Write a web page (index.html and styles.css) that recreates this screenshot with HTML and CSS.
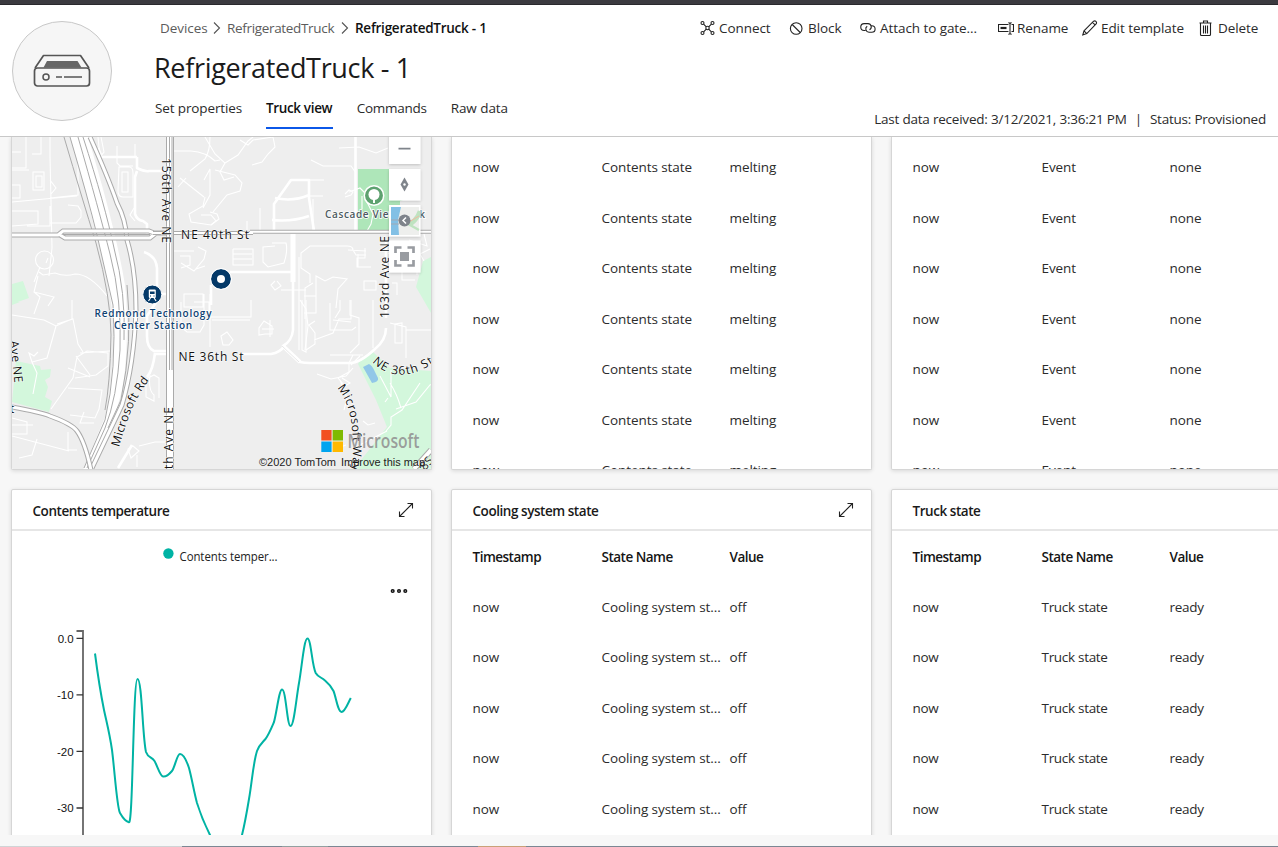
FILE: index.html
```html
<!DOCTYPE html>
<html lang="en">
<head>
<meta charset="utf-8">
<title>RefrigeratedTruck - 1</title>
<link rel="stylesheet" href="styles.css">
</head>
<body>
<div class="topbar"></div>
<header class="header">
  <div class="avatar">
    <svg width="58" height="36" viewBox="0 0 58 36" fill="none" stroke="#555" stroke-width="1.700" stroke-linejoin="round">
      <path d="M2 15 10.500 2.500h37l8.500 12.500"/><path d="M10.500 14.500l3.500-6.500h30.500l4 6.500z" fill="#666" stroke="none"/>
      <rect x="1.500" y="15" width="55" height="18" rx="3"/><circle cx="13" cy="24" r="3" stroke-width="1.500"/><path d="M23 24h6M31 24h18"/>
    </svg>
  </div>
  <div class="heading">
    <nav class="crumbs">
      <span class="c1">Devices</span><svg width="8" height="14" viewBox="0 0 8 14"><path d="m1 1.500 5.500 5.500L1 12.500"/></svg><span class="c2">RefrigeratedTruck</span><svg width="8" height="14" viewBox="0 0 8 14"><path d="m1 1.500 5.500 5.500L1 12.500"/></svg><span class="c3">RefrigeratedTruck - 1</span>
    </nav>
    <h1 class="title">RefrigeratedTruck - 1</h1>
    <nav class="tabs"><a class="t1">Set properties</a><a class="t2 active">Truck view</a><a class="t3">Commands</a><a class="t4">Raw data</a></nav>
  </div>
  <div class="side">
    <div class="toolbar">
      <span class="tool"><svg class="icon" viewBox="0 0 16 16"><circle cx="2.500" cy="3" r="1.500"/><circle cx="12.500" cy="3" r="1.500"/><circle cx="2.500" cy="13" r="1.500"/><circle cx="12.500" cy="13" r="1.500"/><circle cx="7.500" cy="8" r="1.700"/><path d="m3.600 4.100 2.700 2.700m2.400 0 2.700-2.700m-7.800 7.800 2.700-2.700m2.400 0 2.700 2.700"/></svg>Connect</span>
      <span class="tool"><svg class="icon" viewBox="0 0 16 16"><circle cx="7.200" cy="8.500" r="5.800"/><path d="m3.200 4.500 8 8"/></svg>Block</span>
      <span class="tool"><svg class="icon wide" viewBox="0 0 17 16"><path d="M5.500 10.500H4.200a3.400 3.400 0 0 1 0-6.900H8a3.300 3.300 0 0 1 1.500 6.200M10.500 5.700h1.300a3.300 3.300 0 0 1 0 6.600H9a3.300 3.300 0 0 1-1.800-6"/></svg>Attach to gate...</span>
      <span class="tool"><svg class="icon" viewBox="0 0 16 16"><path d="M10.500 4.500H.500v7h10M13.500 4.500h2v7h-2M10.500 2.500l1.500 1 1.500-1m-1.500 1v10m-1.500 1 1.500-1 1.500 1"/><path d="M2.500 8h6" stroke-width="2.200"/></svg>Rename</span>
      <span class="tool"><svg class="icon" viewBox="0 0 16 16"><path d="M.800 15 2 10.800 11.600 1.200q1.300-.7 2.300.2 1.200 1.300.2 2.600L4.800 13.600zM10.500 2.300l2.800 2.800M2 10.800l2.800 2.800"/></svg>Edit template</span>
      <span class="tool"><svg class="icon" viewBox="0 0 16 16"><path d="M1.500 3.500v11a1 1 0 0 0 1 1h8a1 1 0 0 0 1-1v-11M.500 3h12M4.500 3V1h4v2M4.500 5.500v8m2-8v8m2-8v8"/></svg>Delete</span>
    </div>
    <p class="status"><span>Last data received: 3/12/2021, 3:36:21 PM</span><span class="bar">|</span><span>Status: Provisioned</span></p>
  </div>
</header>

<main class="board">
  <section class="card map">
    <svg width="419" height="332" viewBox="12 137 419 332">
      <defs>
        <path id="rd" d="M119 447C125 428 131 403 150 379"/>
        <path id="way" d="M337 388C350 403 355 425 352 474"/>
        <path id="st36" d="M372 362Q398 388 437 361"/>
        <filter id="sh" x="-20%" y="-20%" width="140%" height="140%"><feDropShadow dx="0" dy="1" stdDeviation="1.500" flood-opacity=".2"/></filter>
      </defs>
      <rect x="12" y="137" width="419" height="332" fill="#eee"/>
      <g fill="#d3f7dc">
        <path d="M12 284 23 281 29 298 12 304zM12 302h8l-8 3zM16 361 40 366 41 370 51 369 50 377 45 380 48 387 45 397 52 401 49 412 12 402z"/>
        <path d="M359 362 373 352 390 368 431 371V469H354L387 427 376 400 358 364zM423 261 431 257V313L416 287z"/>
      </g>
      <path d="M358 169h42v63h-42z" fill="#aee6b9"/>
      <path d="M389 200h14l-12 4z" fill="#aee6b9"/>
      <path d="M363 367l6-3q3 1 6 8l3 6q1 4-6 5z" fill="#91c7e8"/>

      <g class="thin">
        <path d="M12 152h9m5-15v31h-14M41 137v17h-9M50 137v19l2 92-3 28M29 170h-17m0 15h8v13h-8M50 198 78 195V160M12 202l65-6M33 172h11v18H33zM36 176h6v11h-6zM50 180l6 8-5 6M12 211h26v13l-26 2M50 206v20H27M68 205l10 1 3 5v6l-5 6H50"/>
        <circle cx="44.500" cy="260" r="9"/>
        <path d="m46 263 2-5M40 267 34 282m5-10 4 3 12-2q10 4 20 1 15 0 32 22M38 276 34 292l6 5-6 17M34 292l20 5-6 9"/>
        <path d="M98 137l2 20 4-5-3-15m16 9v17l3 3h13M135 144v12M119 167h10q4 0 4 6v24h-10q-5 0-5-6zM122 172h6v20h-6zM134 208l-4 7 5 6M174 151h17q15 1 24 10l5-1M190 171l15-12q5-8 5-22M180 178l24 19m0-17 6-11v26l-7 13M178 187l8-9M205 197l-2 9-14 8 2 8 20 3 5-4-5-6h-10"/>
        <path d="M205 137l10 17 10 9-5 9 4 8 10-3M225 163l13-8 10-14 5-4M215 170l20 5 7 8-2 8-13 4-14 17M240 140l8 5 5-5 20-3 2 10-7 7-6 8-10 3M311 160l12 6h28l5 7M339 148l20-1 17 6 12-5M345 194l4-4 4 2-2 3-6 2M349 192l11-4 5 5M210 212l7 2 2 5-8 6M247 221v9m13-22v22M310 180h14m-14 16h13m-10 3v32M362 196v13M367 202l6 12-2 10-4 7"/>
        <path d="M198 247l8 4-2 8-10 12-13-8M174 251h20m-14 5h10v9l-9 3M205 266l-9 3M236 249h17v16h-20v-16m0 5h19m-19 5h19M272 243h14q2 8-2 20l-16 4-5-5v-15l12-1M248 249h-15M275 281l-4 4 4 5 6-4-4-5m4 9h25M310 283v-9l-9-6v-15l9-7h37q6 0 6 4l3 5h10M365 248v10h-8v9h14M358 254v13M348 250l18 1M313 283l-8 5v31M304 296h12v17h-12M316 296v-20l9 5 8-4 14 2-9 10-2 19M364 281h12v9h-12zM388 253l10 7 10 5M402 268v12h13M405 263h12v12M392 283h5v12"/>
        <path d="M184 294h19v13h-19zM181 302v25l6 5h13l4-7v-31m6 0v53M194 302h15v10h-15M210 317h41v-17M212 320h38M300 300l6 9 2 17-3 24M330 303v27h22l4-3M315 321l-6 4 6 8v11l-9 6M333 320l18 2m0-22v19h-12l-6 14-19 7"/>
        <path d="M264 321l8 5v8h-7l-6 1v-7zM262 329h12m-4-9v17M221 336l6-4 6 8-4 5h-6zM350 300v15l9 3v26l-9 9M373 300v48M395 324v19h7v-20zM390 323l16 4v31M406 330h25M330 355h33m-10 0-4 8v9l-11 6 7 8 5-3-8-5M351 365l9-9M317 374l14 5 15-3 7-8M340 380l7 18-3 12"/>
        <path d="M12 315l32 5 12 6 16-7V300M56 326l-9 32-15 4 5 11-4 21m24-70 16-5 5 25 5 8M32 362l-3-9 5 3 4-4M80 353l30-2M73 378l4-21 10-6 21 2v13l-12 9-21 3m-7-10 22 9m-14-21 14 19M73 378l-22 31M68 388l34 2-3 19-4 9-25-3M84 412l-4 11h14M12 418l15 4v12H12m0-9h21M12 436l57 15M37 439l-5 16-13 3M68 432v18h9M150 375q-2 15 4 20v6l-8-4v-18l8-4 5 3v20M131 458l8-7-6-5-5 3zM137 455v12M139 446l16-4h18"/>
        <path d="M391 370v27l-11-21m8 22-3 4M420 383l-18 27-11 7v8l-5 6m15-23q-4-14-11-25m6 26 20-7 14-17 11-5M375 423l-7 2-5-4M352 449l35-18M335 449l11-4M424 261l-4-7 10-5M409 240l18 6-3-12M395 246l15-2"/>
        <path d="M299 350v-93M302 300v50l4 2V300M340 300v10l-5 8M405 260q-8-12-15-11"/>
      </g>

      <g class="mid">
        <path d="M101 157h36m-36-2-3-7M137 157v11q8 4 12 3h17M137 171l-2 6v37q2 6 8 7l4 3v10"/>
        <path d="M355.500 137v95M274 233v-29l17-24h18v18l5 33M275 198q18 4 34-3M272 220q20 2 37-4"/>
        <path d="M230 272h64M144 252q12 4 13 16v33l-10 15v20q0 12 7 15h17M155 353q-2 17-8 24M118 468l14-23M293 234v96q-1 11-10 16l17 16q4 1 10 1h40q10 0 25-14 11-9 11-21"/>
        <path d="M243 354h28q9-1 14-9M154 354h16M157 294h10M211 285v20M386 242v76"/>
      </g>
      <path d="M293 234v48" stroke="#fff" stroke-width="5" fill="none"/>
      <path d="M283 346l17 16" stroke="#fff" stroke-width="4"/>
      <path d="M282 346l17 16" stroke="#ddd" stroke-width=".7"/>

      <g fill="none">
        <path d="M70 137Q84 182 93 222Q112 290 114 330Q113 380 105 417L83 470H89Q122 410 125 370Q129 320 125 285Q116 230 88 137Z" fill="#fff"/>
        <g stroke="#aaa" stroke-width="1">
          <path d="M64 137Q82 198 96 243Q111 298 111 335Q110 385 105 410M70 137Q88 198 97 235L113 305Q117 370 105 420L84 468M78 137Q99 210 110 254Q122 300 120 350Q117 398 105 428L87 468M83 137Q105 205 114 248Q126 293 124 340"/>
        </g>
        <path class="case5" d="M90 137Q108 177 117 203 126 220 127 240 136 270 136 310 134 365 122 405L92 468"/>
        <path class="in5" d="M90 137Q108 177 117 203 126 220 127 240 136 270 136 310 134 365 122 405L92 468"/>
        <path d="M127 285q6 55-6 115l-13 28" stroke="#aaa"/>
        <path class="case5" d="M12 407Q40 412 50 416 72 424 77 431 85 442 91 470"/>
        <path class="in5" d="M12 407Q40 412 50 416 72 424 77 431 85 442 91 470"/>
        <path class="case5" d="M12 235h46l5-4h86l5 2h16M60 235l5 3h85l5-4"/>
        <path class="in5" d="M12 235h46l5-4h86l5 2h16M60 235l5 3h85l5-4"/>
        <path d="M63 234.500h87" stroke="#aaa"/>
        <path d="M153 233h100" stroke="#aaa" stroke-width="4"/><path d="M250 231.800h181" stroke="#aaa" stroke-width="4"/><path d="M153 233h100" stroke="#fff" stroke-width="2"/><path d="M250 231.800h181" stroke="#fff" stroke-width="2"/>
        <path d="M170 137V469" stroke="#aaa" stroke-width="8"/><path d="M170 137V469" stroke="#fff" stroke-width="6"/><path d="M169.500 137V370M172 137V370" stroke="#aaa"/>
        <path d="M414 469l17-19" stroke="#aaa" stroke-width="6"/><path d="M414 469l17-19" stroke="#fff" stroke-width="4"/>
      </g>

      <g class="road">
        <text transform="translate(162 158) rotate(90)" textLength="85">156th Ave NE</text>
        <text x="181" y="238.500" textLength="68">NE 40th St</text>
        <text x="178.500" y="361" textLength="65">NE 36th St</text>
        <text transform="translate(389 318) rotate(-90)" textLength="82">163rd Ave NE</text>
        <text transform="translate(172.500 469) rotate(-90)" textLength="62">th Ave NE</text>
        <text transform="translate(10 341) rotate(84)" textLength="42">Ave NE</text>
        <text x="10" y="413">t</text>
        <text><textPath href="#rd" textLength="74">Microsoft Rd</textPath></text>
        <text><textPath href="#way" textLength="86">Microsoft Way</textPath></text>
        <text><textPath href="#st36" textLength="68">NE 36th St</textPath></text>
        <text transform="translate(425 471) rotate(-48)">8S</text>
      </g>
      <g class="poi">
        <text x="94.500" y="317" textLength="117">Redmond Technology</text>
        <text x="114" y="329" textLength="78">Center Station</text>
        <text class="park" x="325" y="218" textLength="100">Cascade View Park</text>
      </g>
      <circle cx="152.300" cy="294.500" r="9.500" fill="#043968" stroke="#fff"/>
      <rect x="148.800" y="289.500" width="7" height="8.500" rx="1" fill="#fff"/><path d="M150 291.500h4.600v2.500h-4.600z" fill="#043968"/><path d="M150.500 298l-2 3m5.600-3 2 3" stroke="#fff" stroke-width="1.200"/><path d="M150 296h1m2.500 0h1" stroke="#043968"/>
      <circle cx="374" cy="195.500" r="9.700" fill="#5da16f" stroke="#fff" stroke-width="1.500"/>
      <circle cx="374" cy="194.500" r="5.500" fill="#fff"/><path d="M374 196v7" stroke="#fff" stroke-width="2"/>
      <circle cx="221" cy="279" r="7" fill="#fff" stroke="#043968" stroke-width="6"/><circle cx="221" cy="279" r="10.500" fill="none" stroke="#fff"/>

      <g fill="#fff" filter="url(#sh)"><rect x="389" y="130" width="31.500" height="34"/><rect x="389" y="169" width="31.500" height="31.500"/><rect x="389" y="205" width="31.500" height="31.500"/><rect x="389" y="240.500" width="31.500" height="32"/></g>
      <path d="M398.500 148.700h12" stroke="#7f848b" stroke-width="1.800"/>
      <path d="M404.500 177.500l4 7-4 7-4-7z" fill="#7f848b"/><circle cx="404.500" cy="184.500" r="1.200" fill="#fff"/>
      <path d="M391 207h28v28h-28z" fill="#eeefed"/><path d="M391 207h10l-3 13 1 15h-8z" fill="#83c0e5"/><path d="M391 220h8m-8 4h8" stroke="#9fa9b5"/><path d="M405 223q10 0 14-12v5q-5 8-9 9l9 5" fill="none" stroke="#bfe3c0" stroke-width="2.500"/><path d="M409 222l10-6" stroke="#f1b9a3"/>
      <circle cx="404.500" cy="220.500" r="6" fill="#7f848b"/><path d="M406 217.500l-3 3 3 3" fill="none" stroke="#fff" stroke-width="1.500"/>
      <path d="M400 252h9v9h-9z" fill="#999ca1"/><path d="M395.500 253v-5.500h6m6 0h6v5.500m0 7v5.500h-6m-6 0h-6v-5.500" fill="none" stroke="#999ca1" stroke-width="2.700"/>

      <path d="M321.300 430h10.300v10.500h-10.300z" fill="#f25022"/><path d="M332.600 430h10.400v10.500h-10.400z" fill="#7fba00"/><path d="M321.300 441.500h10.300V452h-10.300z" fill="#00a4ef"/><path d="M332.600 441.500h10.400V452h-10.400z" fill="#ffb900"/>
      <text class="brand" x="347.500" y="448" textLength="72" lengthAdjust="spacingAndGlyphs">Microsoft</text>
      <text class="credit" x="259" y="465.500" textLength="77" lengthAdjust="spacingAndGlyphs">©2020 TomTom</text>
      <text class="credit" x="341" y="465.500" textLength="84" lengthAdjust="spacingAndGlyphs">Improve this map</text>
    </svg>
  </section>

  <section class="card scrolled">
    <div class="row"><span>now</span><span>Contents state</span><span>melting</span></div>
    <div class="row"><span>now</span><span>Contents state</span><span>melting</span></div>
    <div class="row"><span>now</span><span>Contents state</span><span>melting</span></div>
    <div class="row"><span>now</span><span>Contents state</span><span>melting</span></div>
    <div class="row"><span>now</span><span>Contents state</span><span>melting</span></div>
    <div class="row"><span>now</span><span>Contents state</span><span>melting</span></div>
    <div class="row"><span>now</span><span>Contents state</span><span>melting</span></div>
  </section>

  <section class="card scrolled">
    <div class="row"><span>now</span><span>Event</span><span>none</span></div>
    <div class="row"><span>now</span><span>Event</span><span>none</span></div>
    <div class="row"><span>now</span><span>Event</span><span>none</span></div>
    <div class="row"><span>now</span><span>Event</span><span>none</span></div>
    <div class="row"><span>now</span><span>Event</span><span>none</span></div>
    <div class="row"><span>now</span><span>Event</span><span>none</span></div>
    <div class="row"><span>now</span><span>Event</span><span>none</span></div>
  </section>

  <section class="card">
    <h2 class="card-head"><span>Contents temperature</span><svg width="16" height="16" viewBox="0 0 16 16"><path d="M1.500 14.500l13-13M9.500 1.500h5v5M1.500 9.500v5h5"/></svg></h2>
    <svg class="chart" width="419" height="320" viewBox="12 531 419 320">
      <circle cx="168.400" cy="553.500" r="5.200" fill="#00b3a4"/>
      <text class="legend" x="179.500" y="561" textLength="98" lengthAdjust="spacingAndGlyphs">Contents temper...</text>
      <g fill="#fff" stroke="#111" stroke-width="1.500"><circle cx="392.700" cy="591" r="1.300"/><circle cx="399" cy="591" r="1.300"/><circle cx="405.300" cy="591" r="1.300"/></g>
      <path d="M76.500 631H83V850" fill="none" stroke="#666" stroke-width="1.800"/>
      <path d="M76.500 638.300H83M76.500 694.900H83M76.500 751.400H83M76.500 808H83" stroke="#333" stroke-width="1.300"/>
      <g class="tick"><text x="73.500" y="642.500">0.0</text><text x="73.500" y="699">-10</text><text x="73.500" y="755.500">-20</text><text x="73.500" y="812">-30</text></g>
      <path d="M95 653.500C98 677 101 695 104 710 107 724 109.500 733 112 750 114.500 769 117 808 120 813 124 820 126 821 129 822.300 133 824 133 679 137.500 679 142 679 142.500 738 146 752 148 758 152 757 154.500 761 157.500 766 160 776 163 776.500 166 777 169 774.500 172 771 175 767 177 754 180 754 184 754 187 762 189 768 192 779 194 792 197 803 201 816 205 825 210 835Q224 862 242 835C245 823 247 811 249 799 252 782 253 764 257 751 259 745 262 743 265.500 739 269 734 271 729 274 722 277 711 279 690 282 689.500 286 689 287 726 290.500 726 294 726 296 700 299 683 302 666 304 638.500 307.500 638.500 311 638.500 312 666 315.700 673 318 677 321 677 325 680.500 328 683 331 686 333.500 691 336 697 338 712 341.500 712 345 712 348 703 350.800 698" fill="none" stroke="#00b3a4" stroke-width="2"/>
    </svg>
  </section>

  <section class="card">
    <h2 class="card-head"><span>Cooling system state</span><svg width="16" height="16" viewBox="0 0 16 16"><path d="M1.500 14.500l13-13M9.500 1.500h5v5M1.500 9.500v5h5"/></svg></h2>
    <div class="row th"><span>Timestamp</span><span>State Name</span><span>Value</span></div>
    <div class="row"><span>now</span><span>Cooling system st...</span><span>off</span></div>
    <div class="row"><span>now</span><span>Cooling system st...</span><span>off</span></div>
    <div class="row"><span>now</span><span>Cooling system st...</span><span>off</span></div>
    <div class="row"><span>now</span><span>Cooling system st...</span><span>off</span></div>
    <div class="row"><span>now</span><span>Cooling system st...</span><span>off</span></div>
  </section>

  <section class="card">
    <h2 class="card-head"><span>Truck state</span></h2>
    <div class="row th"><span>Timestamp</span><span>State Name</span><span>Value</span></div>
    <div class="row truck"><span>now</span><span>Truck state</span><span>ready</span></div>
    <div class="row truck"><span>now</span><span>Truck state</span><span>ready</span></div>
    <div class="row truck"><span>now</span><span>Truck state</span><span>ready</span></div>
    <div class="row truck"><span>now</span><span>Truck state</span><span>ready</span></div>
    <div class="row truck"><span>now</span><span>Truck state</span><span>ready</span></div>
  </section>
</main>
<div class="edge"></div>
</body>
</html>
```
FILE: styles.css
```css
* { box-sizing: border-box; }
body {
  margin: 0; height: 847px; overflow: hidden; background: #f7f7f7; color: #2b2b2b;
  font: 13.5px/20px "Open Sans", "Noto Sans", sans-serif; letter-spacing: -.07px;
  display: flex; flex-direction: column;
}
.topbar { height: 5px; background: #3b3a40; border-bottom: 1px solid #29282d; flex: none; }
.header { height: 132px; flex: none; background: #fff; border-bottom: 1px solid #c8c8c8; display: flex; padding-left: 12px; }
.avatar { width: 100px; height: 100px; margin-top: 15.5px; border-radius: 50%; border: 1px solid #c8c8c8; background: #f6f6f6; display: flex; align-items: center; justify-content: center; flex: none; }
.heading { width: 420px; padding: 13px 0 0 42px; flex: none; white-space: nowrap; }
.crumbs { display: flex; align-items: center; height: 20px; padding-left: 6px; color: #5c5c5c; }
.crumbs svg { margin: 0 6px; fill: none; stroke: #555; stroke-width: 1.1; flex: none; }
.c1 { width: 47px; }
.c2 { width: 108px; letter-spacing: -.33px; }
.c3 { font-weight: 600; color: #111; letter-spacing: -.25px; }
.title { margin: 8px 0 0; font-size: 27px; line-height: 44px; font-weight: 400; color: #1b1b1b; letter-spacing: -.32px; }
.tabs { display: flex; height: 37px; margin-top: 2px; padding-left: 1px; }
.tabs a { height: 37px; line-height: 32px; margin-right: 24px; }
.tabs a.active { font-weight: 600; color: #111; border-bottom: 2px solid #0b57e8; letter-spacing: -.35px; }
.t1 { width: 87px; letter-spacing: -.12px; }
.t2 { width: 67px; }
.t3 { width: 70px; letter-spacing: -.25px; }
.side { flex: 1; padding: 13px 12px 0 168px; }
.toolbar { display: grid; grid-template-columns: 89px 71px 138px 84px 117px 60px; height: 20px; white-space: nowrap; }
.tool { display: flex; align-items: center; gap: 3px; }
.icon { width: 16px; height: 16px; flex: none; fill: none; stroke: #222; stroke-width: 1.1; }
.icon.wide { width: 17px; }
.status { display: flex; justify-content: flex-end; margin: 71px 0 0; white-space: nowrap; letter-spacing: -.22px; }
.bar { margin: 0 8px; }

.board { height: 698px; flex: none; overflow: hidden; display: grid; grid-template-columns: repeat(3, 420px); grid-template-rows: 333px 400px; column-gap: 20px; row-gap: 19px; padding-left: 11px; }
.card { width: 421px; background: #fff; border: 1px solid #d6d6d6; border-radius: 2px; box-shadow: 0 1px 4px rgba(0,0,0,.13); overflow: hidden; }
.map, .scrolled { border-top: 0; border-radius: 0 0 2px 2px; }
.map svg { display: block; letter-spacing: 0; }
.scrolled { padding-top: 5px; }
.card-head { display: flex; justify-content: space-between; align-items: center; height: 41px; margin: 0; padding: 0 17.5px 0 20.5px; border-bottom: 2px solid #e6e6e6; font-size: 13.5px; font-weight: 600; color: #1a1a1a; letter-spacing: -.45px; }
.card-head span { padding-top: 2px; }
.card-head svg { fill: none; stroke: #222; stroke-width: 1.1; }
.row { display: grid; grid-template-columns: 129px 128px 1fr; height: 50.5px; line-height: 50.5px; padding-left: 20.5px; white-space: nowrap; }
.truck { letter-spacing: -.3px; }
.th { font-weight: 600; color: #151515; letter-spacing: -.5px; padding-top: 1px; }
.chart { display: block; }
.legend { font: 12.5px "Open Sans", sans-serif; fill: #222; }
.tick { font: 11.5px "Liberation Sans", sans-serif; fill: #111; text-anchor: end; }

.thin { fill: none; stroke: #fff; stroke-width: 1.1; }
.mid { fill: none; stroke: #fff; stroke-width: 2.6; stroke-linejoin: round; }
.case5 { stroke: #aaa; stroke-width: 5; }
.in5 { stroke: #fff; stroke-width: 3; }
.road { font: 12px "Open Sans", sans-serif; fill: #111; stroke: #fff; stroke-opacity: .8; stroke-width: 1.2px; paint-order: stroke; }
.poi { font: 600 10px "Open Sans", sans-serif; fill: #0f4372; stroke: #fff; stroke-width: 1.5px; paint-order: stroke; }
.poi .park { fill: #4c5a60; }
.brand { font: 600 19px "Open Sans", sans-serif; fill: #929292; fill-opacity: .9; }
.credit { font: 11px "Liberation Sans", sans-serif; fill: #222; }

.edge { height: 1px; margin-top: 11px; background: linear-gradient(90deg, #d0d4d6 182px, #7b8793 182px 282px, #92a0a0 282px 328px, #7b8793 328px 478px, #c9a178 478px 526px, #7b8793 526px); }
```
